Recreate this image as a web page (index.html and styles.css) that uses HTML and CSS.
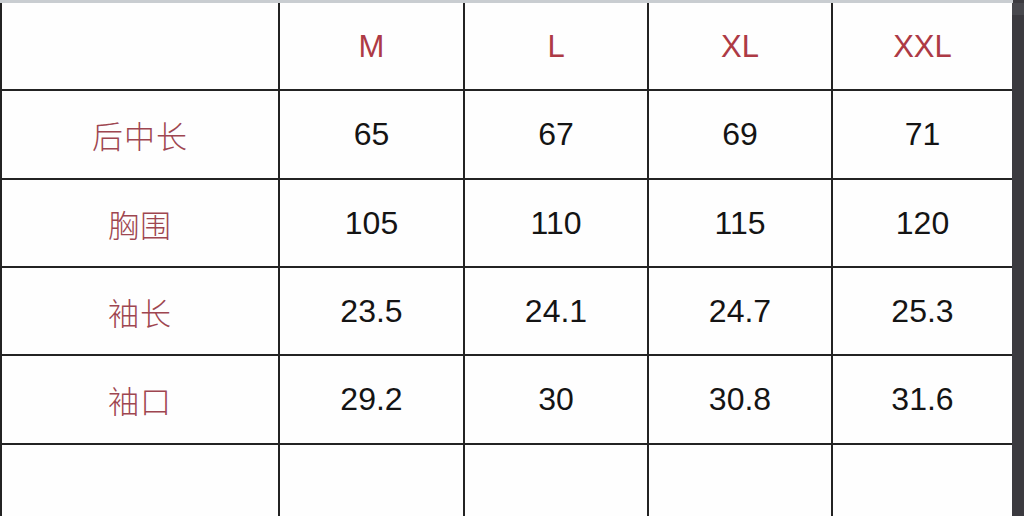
FILE: index.html
```html
<!DOCTYPE html>
<html lang="zh">
<head>
<meta charset="utf-8">
<title>尺码表</title>
<link rel="stylesheet" href="styles.css">
</head>
<body>
<div class="topband"></div>
<div class="frame">
  <div class="chart">
    <div class="cell"></div>
    <div class="cell head">M</div>
    <div class="cell head">L</div>
    <div class="cell head">XL</div>
    <div class="cell head">XXL</div>

    <div class="cell label">后中长</div>
    <div class="cell num">65</div>
    <div class="cell num">67</div>
    <div class="cell num">69</div>
    <div class="cell num">71</div>

    <div class="cell label">胸围</div>
    <div class="cell num">105</div>
    <div class="cell num">110</div>
    <div class="cell num">115</div>
    <div class="cell num">120</div>

    <div class="cell label">袖长</div>
    <div class="cell num">23.5</div>
    <div class="cell num">24.1</div>
    <div class="cell num">24.7</div>
    <div class="cell num">25.3</div>

    <div class="cell label">袖口</div>
    <div class="cell num">29.2</div>
    <div class="cell num">30</div>
    <div class="cell num">30.8</div>
    <div class="cell num">31.6</div>

    <div class="cell"></div>
    <div class="cell"></div>
    <div class="cell"></div>
    <div class="cell"></div>
    <div class="cell"></div>
  </div>
  <div class="edge"></div>
</div>
</body>
</html>
```

FILE: styles.css
```css
html, body {
  margin: 0;
  padding: 0;
  height: 100%;
  overflow: hidden;
}

html {
  background: #3b3a3f;
}

body {
  display: flex;
  flex-direction: column;
  font-family: "Liberation Sans", Arial, sans-serif;
  background: #3b3a3f;
}

.topband {
  height: 3px;
  width: 1013px;
  background: #c9cdd1;
  flex: none;
}

.frame {
  flex: 1 1 auto;
  display: flex;
  flex-direction: row;
  align-items: stretch;
  min-height: 0;
}

.chart {
  flex: none;
  box-sizing: border-box;
  width: 1012px;
  padding-left: 2px;
  background: #232323;
  display: grid;
  grid-template-columns: 276px 183px 182px 182px 179px;
  grid-template-rows: 86px 87px 86px 86px 87px 1fr;
  column-gap: 2px;
  row-gap: 2px;
}

.cell {
  background: #fefefe;
  display: flex;
  align-items: center;
  justify-content: center;
}

.head {
  font-size: 31px;
  color: #ad3a45;
  padding-top: 1px;
}

.num {
  font-size: 32px;
  color: #141414;
}

.label {
  font-family: "Noto Sans CJK SC", "Noto Sans", sans-serif;
  font-weight: 300;
  font-size: 31px;
  color: #9e4650;
  letter-spacing: 1px;
}

.edge {
  flex: 1 0 12px;
  background: #3b3a3f;
  border-top: 12px solid #48484d;
}
```
